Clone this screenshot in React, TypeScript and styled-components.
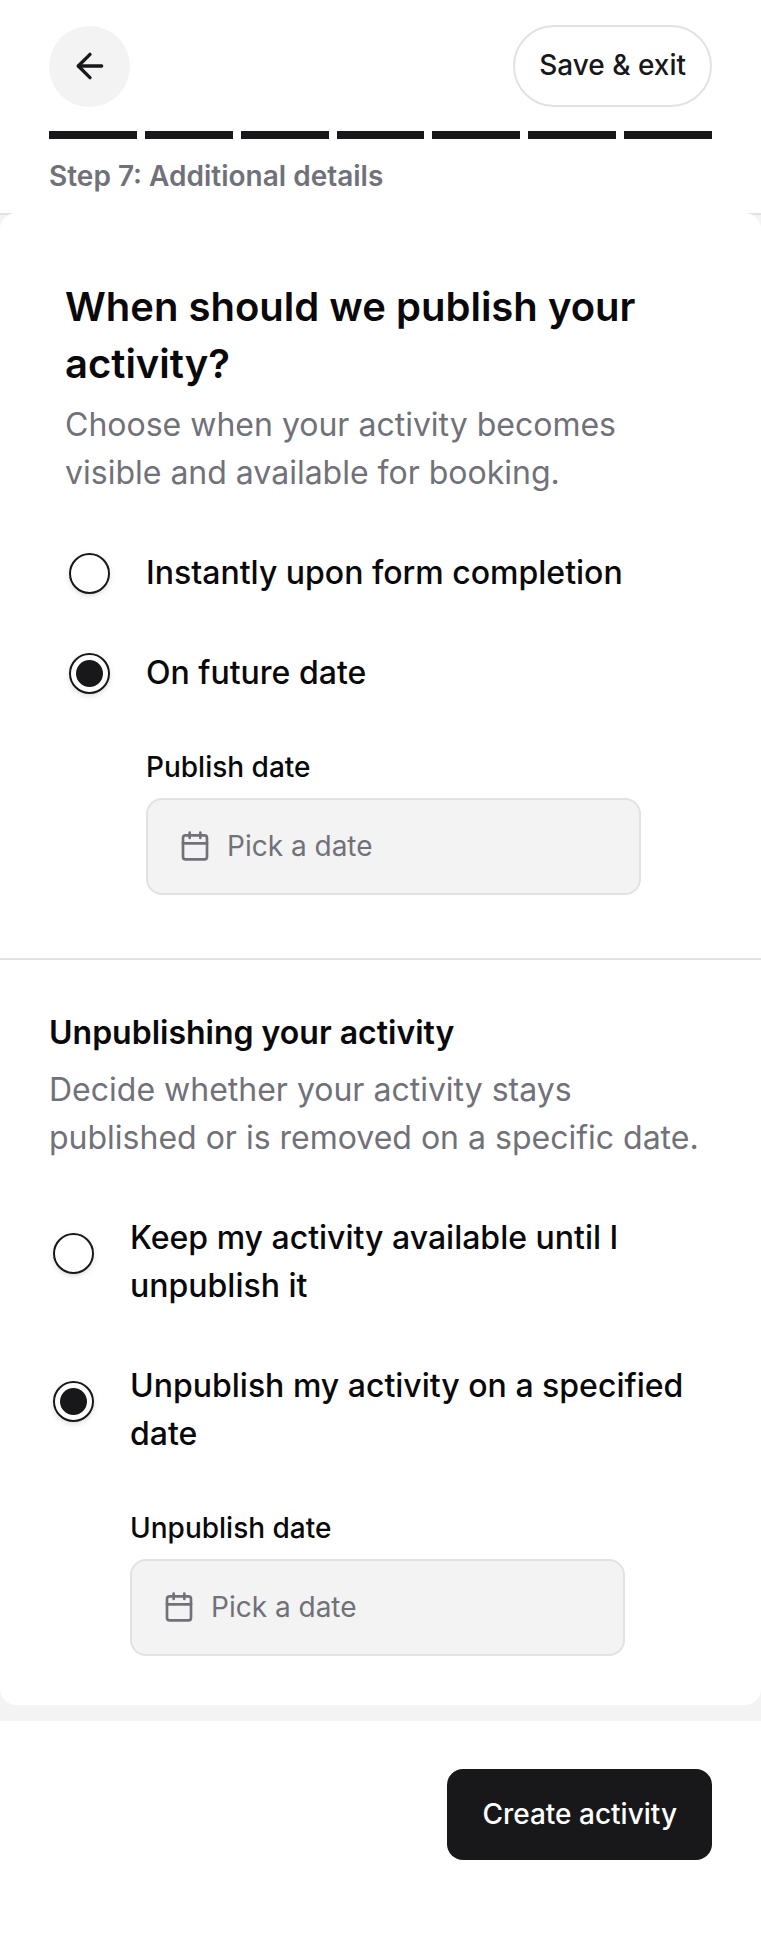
import React, { useState } from "react";
import styled, { createGlobalStyle, css } from "styled-components";
import { ArrowLeft, Calendar } from "lucide-react";

const color = {
  ink: "#09090b",
  dark: "#18181b",
  muted: "#71717a",
  line: "#e2e2e2",
  fill: "#f3f3f3",
  white: "#ffffff",
};

const GlobalStyle = createGlobalStyle`
  *, *::before, *::after { box-sizing: border-box; }
  body {
    margin: 0;
    background: ${color.white};
    color: ${color.ink};
    font-family: Inter, "Liberation Sans", sans-serif;
  }
  button, input { font: inherit; margin: 0; }
  button { cursor: pointer; }
  h1, h2, p { margin: 0; }
`;

const Page = styled.div`
  display: flex;
  flex-direction: column;
  min-height: 100vh;
`;

const Header = styled.header`
  display: flex;
  flex-direction: column;
  padding: 25px 49px 16px;
  border-bottom: 2px solid ${color.line};
`;

const Toolbar = styled.div`
  display: flex;
  align-items: center;
  justify-content: space-between;
`;

const BackButton = styled.button`
  display: grid;
  place-items: center;
  width: 81px;
  height: 81px;
  padding: 0;
  border: 0;
  border-radius: 50%;
  background: ${color.fill};
  color: ${color.dark};
`;

const SaveButton = styled.button`
  height: 82px;
  padding: 0 24px 2px;
  border: 2px solid ${color.line};
  border-radius: 41px;
  background: ${color.white};
  color: ${color.dark};
  font-size: 28px;
  font-weight: 500;
`;

const Progress = styled.div`
  display: flex;
  gap: 8px;
  margin-top: 24px;
`;

const Segment = styled.span`
  flex: 1;
  height: 8px;
  background: ${color.dark};
`;

const StepLabel = styled.p`
  margin-top: 17px;
  color: ${color.muted};
  font-size: 28px;
  font-weight: 600;
  line-height: 41px;
`;

const Body = styled.main`
  display: flow-root;
  padding-bottom: 16px;
  background: ${color.fill};
`;

/* The card overlaps the header rule, which shows only at its rounded corners. */
const Card = styled.div`
  margin-top: -2px;
  border-radius: 16px;
  background: ${color.white};
`;

const PublishSection = styled.section`
  padding: 65px 65px 63px;
  border-bottom: 2px solid ${color.line};
`;

const UnpublishSection = styled.section`
  padding: 49px;
`;

const Title = styled.h1`
  font-size: 40px;
  font-weight: 600;
  line-height: 57px;
`;

const Subtitle = styled.h2`
  font-size: 32px;
  font-weight: 600;
  line-height: 48px;
`;

const Description = styled.p`
  margin-top: 9px;
  color: ${color.muted};
  font-size: 32px;
  line-height: 48px;
`;

const Options = styled.div`
  display: flex;
  flex-direction: column;
  gap: 52px;
  margin-top: 52px;
`;

const Option = styled.label`
  display: flex;
  align-items: flex-start;
  gap: 36px;
  padding-left: 4px;
  font-size: 32px;
  font-weight: 500;
  line-height: 48px;
  cursor: pointer;
`;

const Radio = styled.input.attrs({ type: "radio" })<{ $tall?: boolean }>`
  appearance: none;
  display: grid;
  place-items: center;
  flex: none;
  width: 41px;
  height: 41px;
  margin-top: ${(p) => (p.$tall ? 19 : 4)}px;
  border: 2px solid ${color.dark};
  border-radius: 50%;
  background: ${color.white};
  box-shadow: 0 2px 6px rgba(0, 0, 0, 0.1), 0 2px 4px -2px rgba(0, 0, 0, 0.1);

  ${(p) =>
    p.checked &&
    css`
      &::before {
        content: "";
        width: 27px;
        height: 27px;
        border-radius: 50%;
        background: ${color.dark};
      }
    `}
`;

const DateField = styled.div`
  display: flex;
  flex-direction: column;
  gap: 10px;
  max-width: 576px;
  margin-top: 50px;
  padding-left: 81px;
`;

const FieldLabel = styled.label`
  font-size: 28px;
  font-weight: 500;
  line-height: 41px;
`;

const DateButton = styled.button`
  display: flex;
  align-items: center;
  gap: 16px;
  height: 97px;
  padding: 0 31px 2px;
  border: 2px solid ${color.line};
  border-radius: 16px;
  background: ${color.fill};
  color: ${color.muted};
  font-size: 28px;
`;

const Footer = styled.footer`
  display: flex;
  justify-content: flex-end;
  padding: 48px 49px;
`;

const CreateButton = styled.button`
  height: 91px;
  padding: 0 35px 2px;
  border: 0;
  border-radius: 16px;
  background: ${color.dark};
  color: ${color.white};
  font-size: 28px;
  font-weight: 500;
`;

const steps = [1, 2, 3, 4, 5, 6, 7];

function DatePicker({ id, label }: { id: string; label: string }) {
  return (
    <DateField>
      <FieldLabel htmlFor={id}>{label}</FieldLabel>
      <DateButton id={id} type="button">
        <Calendar size={32} aria-hidden />
        Pick a date
      </DateButton>
    </DateField>
  );
}

export default function App() {
  const [publish, setPublish] = useState("future");
  const [unpublish, setUnpublish] = useState("date");

  return (
    <Page>
      <GlobalStyle />
      <Header>
        <Toolbar>
          <BackButton type="button" aria-label="Back">
            <ArrowLeft size={40} aria-hidden />
          </BackButton>
          <SaveButton type="button">Save &amp; exit</SaveButton>
        </Toolbar>
        <Progress aria-hidden>
          {steps.map((step) => (
            <Segment key={step} />
          ))}
        </Progress>
        <StepLabel>Step 7: Additional details</StepLabel>
      </Header>

      <Body>
        <Card>
          <PublishSection>
            <Title>When should we publish your activity?</Title>
            <Description>
              Choose when your activity becomes visible and available for booking.
            </Description>
            <Options role="radiogroup" aria-label="Publish time">
              <Option>
                <Radio
                  name="publish"
                  checked={publish === "instant"}
                  onChange={() => setPublish("instant")}
                />
                Instantly upon form completion
              </Option>
              <Option>
                <Radio
                  name="publish"
                  checked={publish === "future"}
                  onChange={() => setPublish("future")}
                />
                On future date
              </Option>
            </Options>
            {publish === "future" && <DatePicker id="publish-date" label="Publish date" />}
          </PublishSection>

          <UnpublishSection>
            <Subtitle>Unpublishing your activity</Subtitle>
            <Description>
              Decide whether your activity stays published or is removed on a specific date.
            </Description>
            <Options role="radiogroup" aria-label="Unpublish time">
              <Option>
                <Radio
                  $tall
                  name="unpublish"
                  checked={unpublish === "keep"}
                  onChange={() => setUnpublish("keep")}
                />
                Keep my activity available until I unpublish it
              </Option>
              <Option>
                <Radio
                  $tall
                  name="unpublish"
                  checked={unpublish === "date"}
                  onChange={() => setUnpublish("date")}
                />
                Unpublish my activity on a specified date
              </Option>
            </Options>
            {unpublish === "date" && <DatePicker id="unpublish-date" label="Unpublish date" />}
          </UnpublishSection>
        </Card>
      </Body>

      <Footer>
        <CreateButton type="submit">Create activity</CreateButton>
      </Footer>
    </Page>
  );
}
